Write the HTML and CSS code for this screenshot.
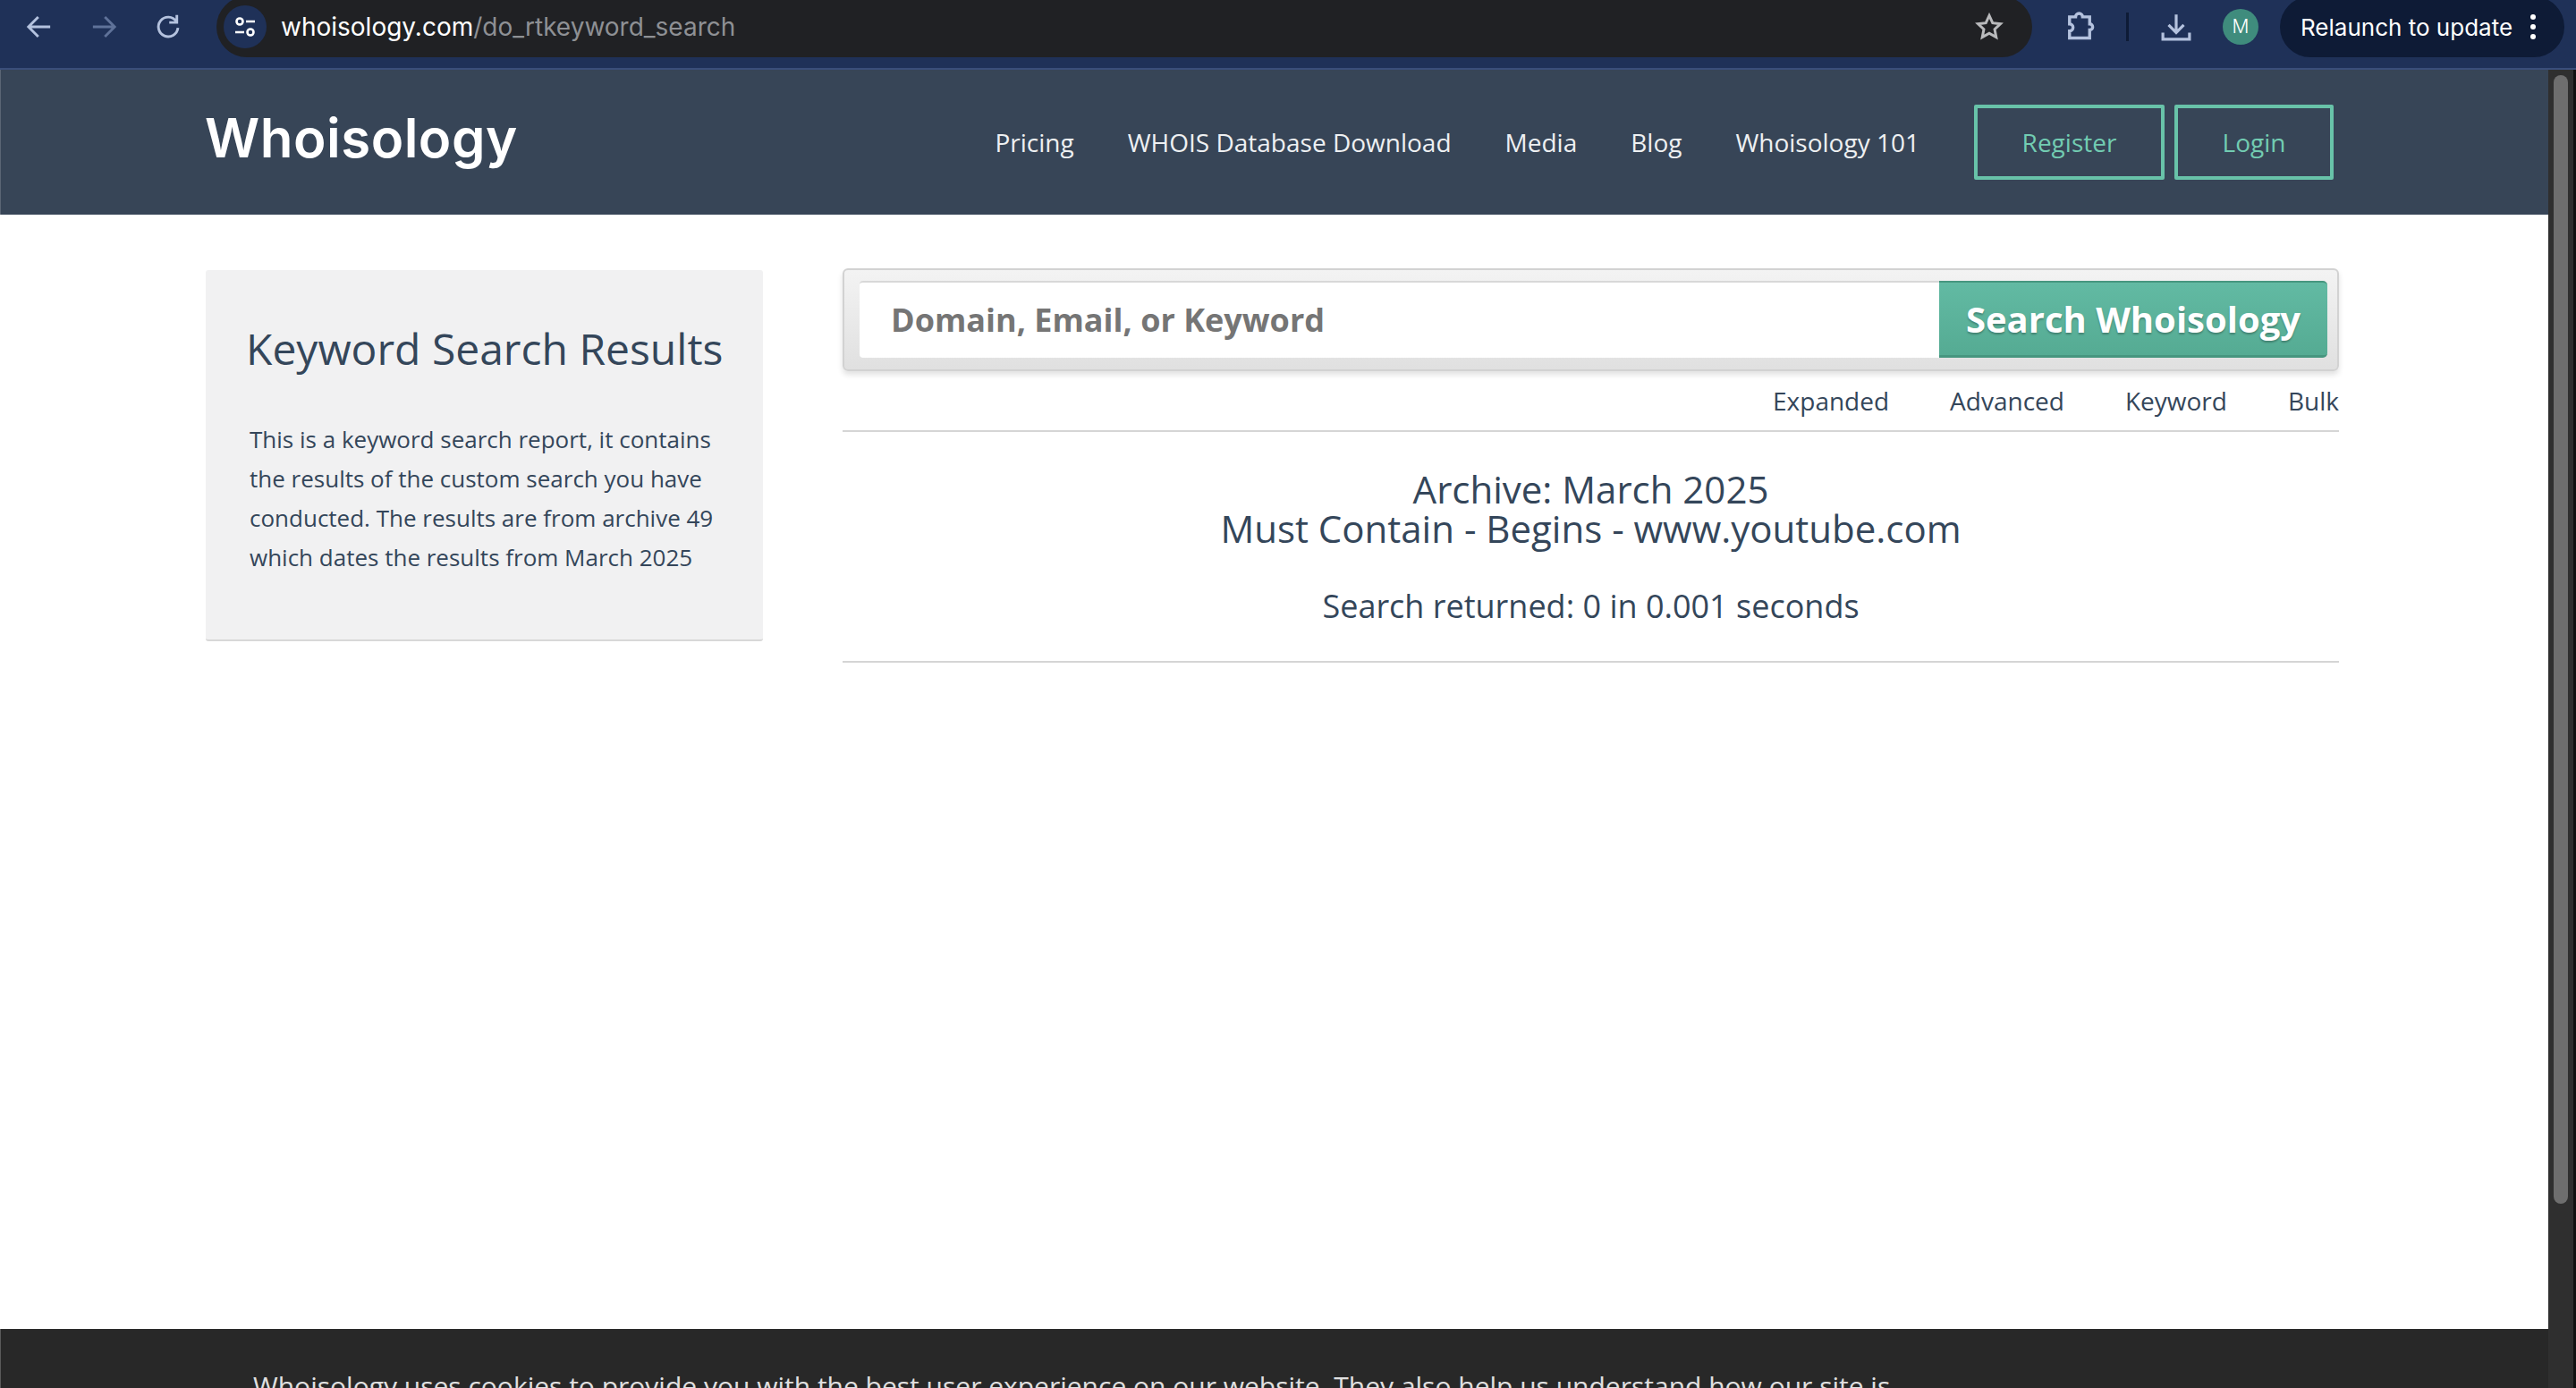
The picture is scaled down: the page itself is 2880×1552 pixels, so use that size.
FILE: index.html
```html
<!DOCTYPE html>
<html lang="en">
<head>
  <meta charset="UTF-8">
  <meta name="viewport" content="width=device-width, initial-scale=1.0">
  <title>Whoisology - Keyword Search Results</title>
  <link rel="stylesheet" href="styles.css">
</head>
<body>
  <div class="toolbar">
    <div class="toolbar-nav">
      <svg class="tb-icon" viewBox="0 0 28 28"><path d="M24 14H5M13 5l-9 9 9 9" /></svg>
      <svg class="tb-icon tb-icon-off" viewBox="0 0 28 28"><path d="M4 14h19M15 5l9 9-9 9" /></svg>
      <svg class="tb-icon" viewBox="0 0 28 28"><path d="M21.500 9A9 9 0 1 0 23 15M22 3v7h-7" /></svg>
    </div>
    <div class="omnibox">
      <span class="site-info">
        <svg viewBox="0 0 28 28"><circle cx="8" cy="8" r="3.500" /><path d="M15 8h10M3 20h10" /><circle cx="20" cy="20" r="3.500" /></svg>
      </span>
      <span class="url"><span class="url-host">whoisology.com</span>/do_rtkeyword_search</span>
      <svg class="star" viewBox="0 0 28 28"><path d="M14 3l3.300 7.200 7.700.9-5.700 5.300 1.500 7.800L14 20.300l-6.800 3.900 1.500-7.800L3 11.100l7.700-.9z" /></svg>
    </div>
    <svg class="tb-icon tb-ext" viewBox="0 0 32 32"><path d="M6 7h6a3.500 3.500 0 0 1 7 0h7v7a3 3 0 0 1 0 6v8H6v-7a3.500 3.500 0 0 0 0-7z" /></svg>
    <span class="tb-divider"></span>
    <svg class="tb-icon tb-download" viewBox="0 0 32 32"><path d="M16 3v18M8 14l8 8 8-8M2 22v7h28v-7" /></svg>
    <span class="avatar">M</span>
    <div class="relaunch">
      <span>Relaunch to update</span>
      <span class="dots"><i></i><i></i><i></i></span>
    </div>
  </div>

  <div class="window">
    <div class="site">
      <header class="site-header">
        <a class="logo">Whoisology</a>
        <nav class="main-nav">
          <a>Pricing</a>
          <a>WHOIS Database Download</a>
          <a>Media</a>
          <a>Blog</a>
          <a>Whoisology 101</a>
        </nav>
        <div class="auth">
          <a class="btn-outline btn-register">Register</a>
          <a class="btn-outline btn-login">Login</a>
        </div>
      </header>

      <main class="content">
        <aside class="sidebar">
          <h2>Keyword Search Results</h2>
          <p>This is a keyword search report, it contains the results of the custom search you have conducted. The results are from archive 49 which dates the results from March 2025</p>
        </aside>
        <section class="results">
          <form class="search-box">
            <input type="text" placeholder="Domain, Email, or Keyword">
            <button type="button">Search Whoisology</button>
          </form>
          <div class="search-types">
            <a>Expanded</a>
            <a>Advanced</a>
            <a>Keyword</a>
            <a>Bulk</a>
          </div>
          <div class="summary">
            <h3>Archive: March 2025<br>Must Contain - Begins - www.youtube.com</h3>
            <p>Search returned: 0 in 0.001 seconds</p>
          </div>
        </section>
      </main>

      <footer class="cookie-bar">
        <p>Whoisology uses cookies to provide you with the best user experience on our website. They also help us understand how our site is</p>
      </footer>
    </div>
    <div class="scrollbar"><div class="scroll-thumb"></div></div>
  </div>
</body>
</html>
```

FILE: styles.css
```css
* {
  box-sizing: border-box;
}

html, body {
  margin: 0;
  height: 100%;
  overflow: hidden;
}

body {
  display: flex;
  flex-direction: column;
  font-family: "Open Sans", Arial, sans-serif;
  color: #34465a;
  background: #fff;
}

/* browser chrome */
.toolbar {
  display: flex;
  align-items: flex-start;
  flex: none;
  height: 78px;
  background: #1f3158;
  border-bottom: 2px solid #3a4e7a;
  font-family: Inter, Arial, sans-serif;
  color: #fff;
}

.toolbar-nav {
  display: flex;
  gap: 38px;
  width: 242px;
  padding: 13px 0 0 27px;
}

.tb-icon {
  width: 34px;
  height: 34px;
  fill: none;
  stroke: #b4c2de;
  stroke-width: 2.4;
}

.tb-icon-off {
  stroke: #5f7299;
}

.omnibox {
  display: flex;
  align-items: center;
  width: 2030px;
  height: 68px;
  margin-top: -4px;
  padding: 0 32px 0 8px;
  background: #202124;
  border-radius: 34px;
}

.site-info {
  display: flex;
  align-items: center;
  justify-content: center;
  width: 48px;
  height: 48px;
  border-radius: 50%;
  background: #1f3158;
}

.site-info svg {
  width: 28px;
  height: 28px;
  fill: none;
  stroke: #fff;
  stroke-width: 2.6;
}

.url {
  flex: 1;
  margin-left: 16px;
  font-size: 28px;
  color: #8e9094;
}

.url-host {
  color: #fff;
}

.star {
  width: 32px;
  height: 32px;
  fill: none;
  stroke: #b9babc;
  stroke-width: 2.6;
}

.tb-ext {
  width: 36px;
  height: 36px;
  margin: 11px 0 0 35px;
  stroke-width: 3;
}

.tb-divider {
  width: 3px;
  height: 32px;
  margin: 14px 0 0 34px;
  background: #0e1b36;
}

.tb-download {
  width: 34px;
  height: 34px;
  margin: 13px 0 0 36px;
  stroke-width: 3;
}

.avatar {
  width: 40px;
  height: 40px;
  margin: 10px 0 0 35px;
  border-radius: 50%;
  background: #3f8c7d;
  text-align: center;
  font-size: 21px;
  font-weight: 300;
  line-height: 40px;
}

.relaunch {
  display: flex;
  align-items: center;
  width: 318px;
  height: 68px;
  margin: -4px 0 0 24px;
  padding-left: 23px;
  background: #0e1b36;
  border-radius: 34px;
  font-size: 26px;
}

.dots {
  display: flex;
  flex-direction: column;
  gap: 5px;
  margin-left: 20px;
}

.dots i {
  width: 6px;
  height: 6px;
  border-radius: 50%;
  background: #fff;
}

.window {
  display: flex;
  flex: 1;
  min-height: 0;
}

.site {
  display: flex;
  flex-direction: column;
  flex: 1;
  min-width: 0;
}

.scrollbar {
  flex: none;
  width: 31px;
  padding: 6px 8px 0 6px;
  background: #2f2f2f;
  border-right: 3px solid #111;
}

.scroll-thumb {
  width: 16px;
  height: 1262px;
  border-radius: 8px;
  background: #6e6e6e;
}

/* site header */
.site-header {
  display: flex;
  align-items: center;
  flex: none;
  height: 162px;
  padding: 0 240px 0 228px;
  background: #374557;
  border-left: 1px solid #5a6574;
}

.logo {
  margin-top: -11px;
  font-family: Inter, Arial, sans-serif;
  font-size: 60px;
  font-weight: 600;
  letter-spacing: 0.5px;
  color: #fff;
}

.main-nav {
  display: flex;
  gap: 60px;
  margin-left: auto;
  font-size: 28px;
  color: #eef0f2;
}

.auth {
  display: flex;
  gap: 11px;
  margin-left: 61px;
}

.btn-outline {
  height: 84px;
  border: 4px solid #68c3a9;
  border-radius: 2px;
  text-align: center;
  font-size: 28px;
  line-height: 76px;
  color: #72ccb2;
}

.btn-register {
  width: 213px;
}

.btn-login {
  width: 178px;
}

/* main area */
.content {
  display: flex;
  align-items: flex-start;
  flex: 1;
  gap: 89px;
  padding: 60px 234px 0 230px;
}

.sidebar {
  flex: none;
  width: 623px;
  height: 415px;
  margin-top: 2px;
  padding: 58px 45px 0;
  background: #f1f1f2;
  border-bottom: 2px solid #d8d8d8;
  border-radius: 3px;
}

.sidebar h2 {
  margin: 0 0 49px;
  font-size: 48px;
  font-weight: 400;
  line-height: 60px;
  white-space: nowrap;
}

.sidebar p {
  margin: 0 0 0 4px;
  font-size: 26px;
  line-height: 44px;
}

.results {
  flex: 1;
  min-width: 0;
}

.search-box {
  display: flex;
  height: 115px;
  padding: 12px 11px 13px 17px;
  background: linear-gradient(#f3f3f3, #e0e0e0);
  border: 2px solid #d2d2d2;
  border-radius: 6px;
  box-shadow: 0 4px 6px rgba(0, 0, 0, 0.12);
}

.search-box input {
  flex: 1;
  min-width: 0;
  padding: 0 0 2px 35px;
  border: none;
  border-top: 2px solid #d8d8d8;
  border-radius: 4px 0 0 4px;
  background: #fff;
  font-family: "Open Sans", Arial, sans-serif;
  font-size: 36px;
  font-weight: 700;
}

.search-box input::placeholder {
  color: #757575;
  opacity: 1;
}

.search-box button {
  flex: none;
  width: 434px;
  padding: 0;
  background: linear-gradient(#62baa3, #55ab93);
  border: none;
  border-top: 2px solid #46967f;
  border-bottom: 3px solid #46967f;
  border-radius: 0 5px 5px 0;
  font-family: "Open Sans", Arial, sans-serif;
  font-size: 40px;
  font-weight: 700;
  color: #fff;
  text-shadow: 0 2px 2px rgba(0, 0, 0, 0.25);
}

.search-types {
  display: flex;
  justify-content: flex-end;
  gap: 68px;
  height: 68px;
  padding-top: 13px;
  border-bottom: 2px solid #d5d5d5;
  font-size: 28px;
  line-height: 40px;
}

.summary {
  height: 258px;
  padding-top: 42px;
  border-bottom: 2px solid #d5d5d5;
  text-align: center;
}

.summary h3 {
  margin: 0;
  font-size: 42px;
  font-weight: 400;
  line-height: 44px;
}

.summary p {
  margin: 43px 0 0;
  font-size: 36px;
  line-height: 44px;
}

/* cookie notice, runs off the bottom of the window */
.cookie-bar {
  flex: none;
  height: 66px;
  overflow: hidden;
  padding: 42px 0 0 282px;
  background: #282828;
  border-left: 1px solid #5a5a5a;
  color: #e0e0e0;
  font-size: 30px;
  white-space: nowrap;
}

.cookie-bar p {
  margin: 0;
  line-height: 44px;
}
```
